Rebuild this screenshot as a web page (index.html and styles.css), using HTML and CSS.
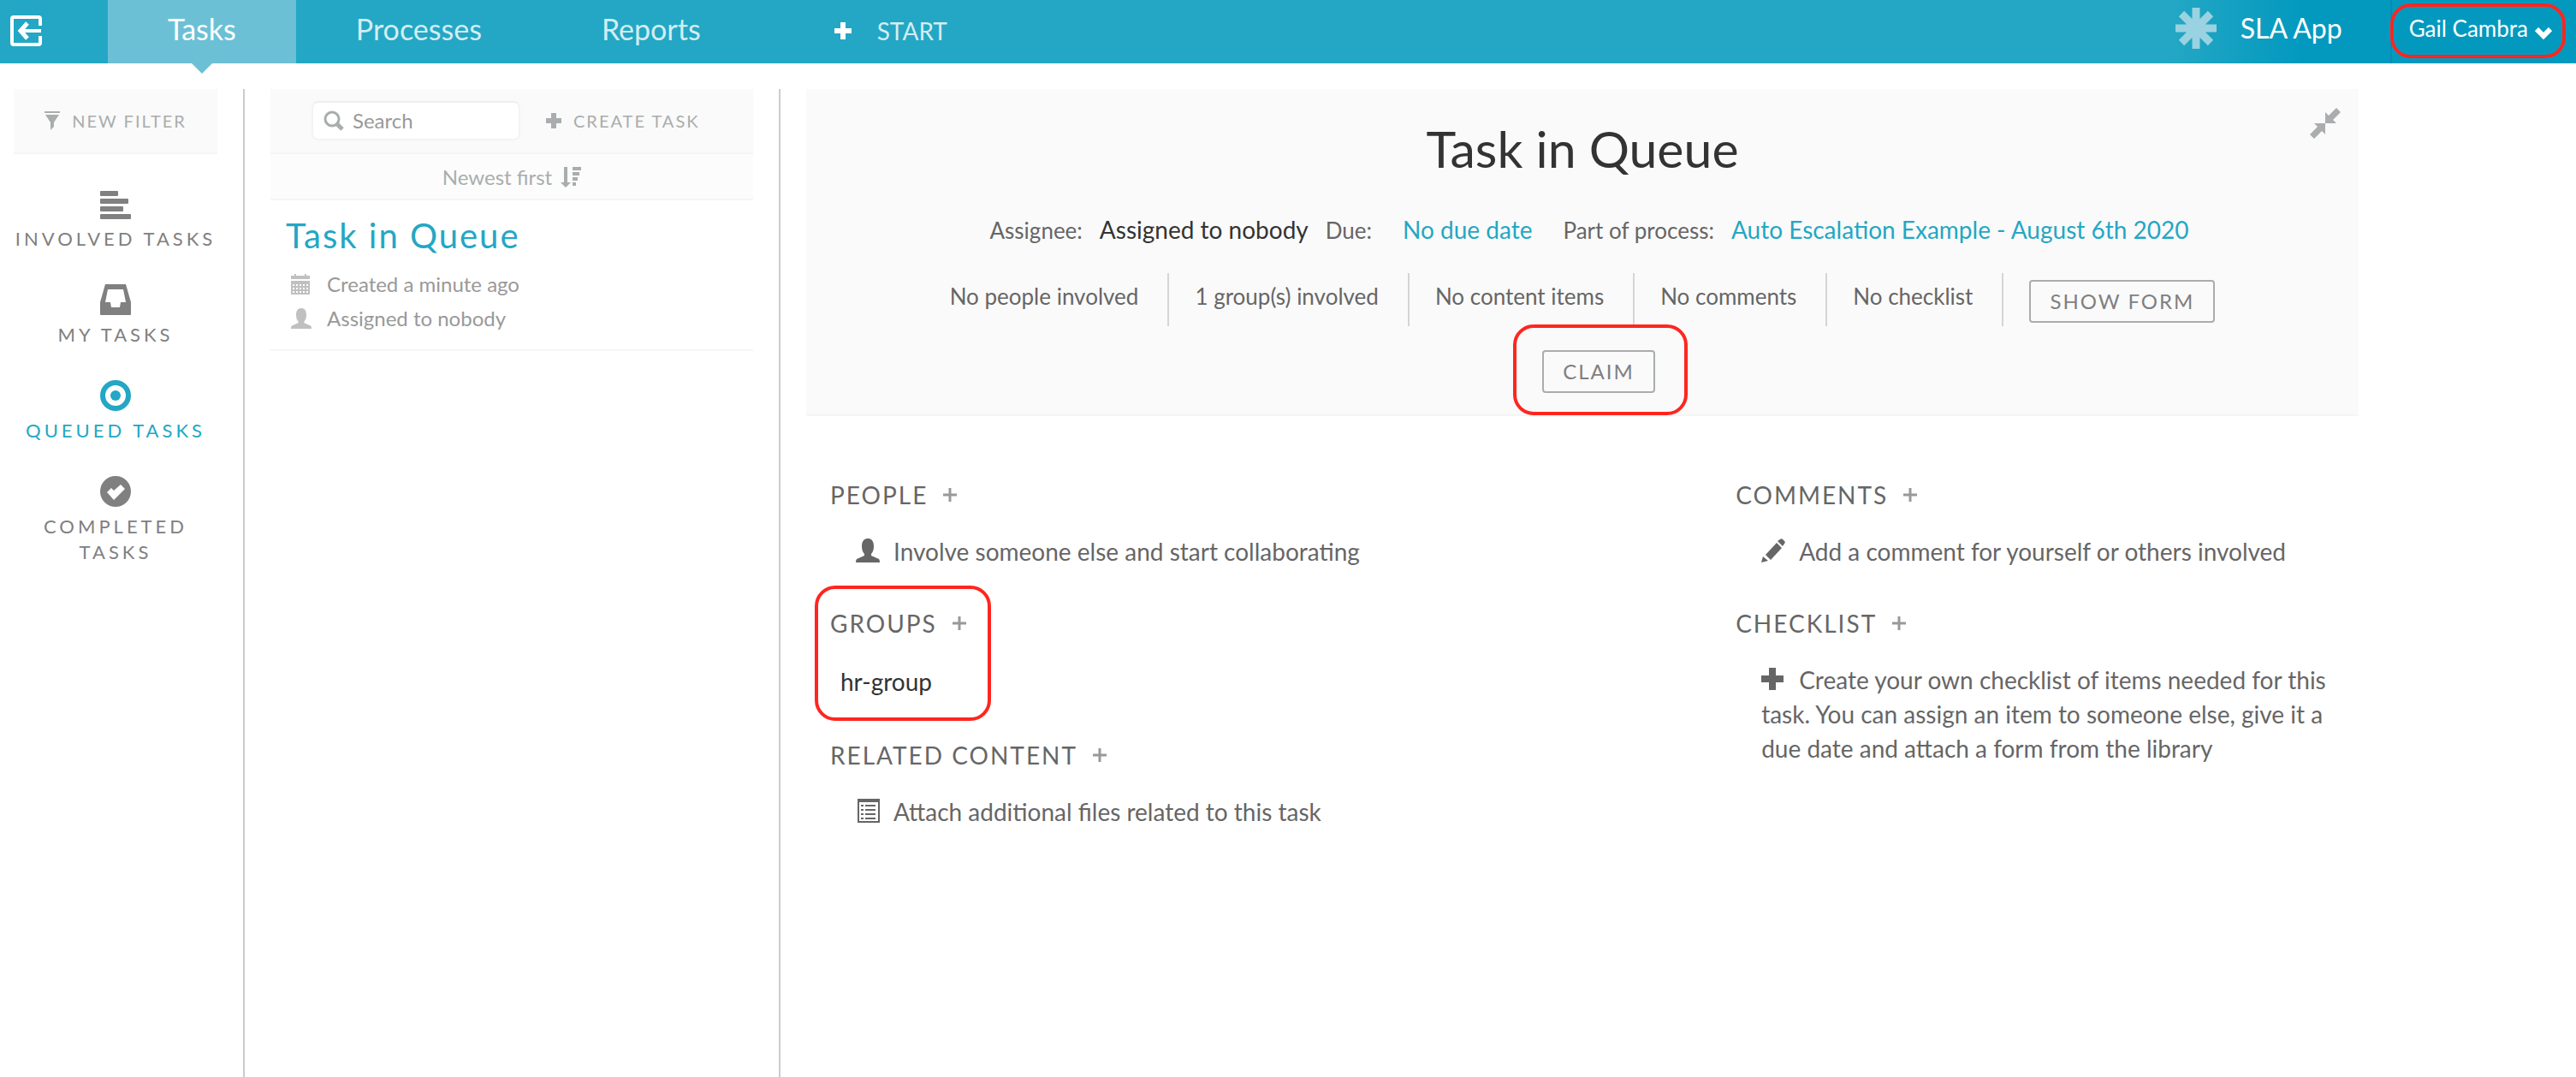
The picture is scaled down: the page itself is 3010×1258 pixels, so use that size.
FILE: index.html
```html
<!DOCTYPE html>
<html lang="en">
<head>
<meta charset="utf-8">
<title>Tasks</title>
<link rel="stylesheet" href="styles.css">
</head>
<body>
<header class="topbar">
  <button class="home" type="button" aria-label="Back to apps">
    <svg width="37" height="36" viewBox="0 0 37 36" fill="none" stroke="currentColor" stroke-width="4"><path d="M35 12V4q0-2-2-2H4q-2 0-2 2v28q0 2 2 2h29q2 0 2-2v-8"/><path d="M36 18H13"/><path d="M20 9l-8 9 8 9" stroke-width="5"/></svg>
  </button>
  <nav class="tabs">
    <a class="tab tab-active" href="#tasks">Tasks</a>
    <a class="tab" href="#processes">Processes</a>
    <a class="tab" href="#reports">Reports</a>
  </nav>
  <button class="start" type="button">
    <svg width="20" height="20" viewBox="0 0 20 20" fill="#fff"><path d="M7 0h6v7h7v6h-7v7H7v-7H0V7h7z"/></svg>
    START
  </button>
  <div class="app">
    <svg width="48" height="48" viewBox="0 0 48 48" stroke="currentColor" stroke-width="9"><path d="M24 0v48M0 24h48M7 7l34 34M41 7L7 41"/></svg>
    <span class="app-name">SLA App</span>
  </div>
  <button class="user callout callout-user" type="button">
    Gail Cambra
    <svg width="20" height="14" viewBox="0 0 20 14" fill="none" stroke="currentColor" stroke-width="6"><path d="M2 2l8 8 8-8"/></svg>
  </button>
</header>

<main class="columns">
  <aside class="filters">
    <div class="panel filter-bar">
      <button class="quiet" type="button">
        <svg width="18" height="22" viewBox="0 0 18 22" fill="currentColor"><path d="M0 0h18v2H0zM1 4h16l-6 9v5l-4 4v-9z"/></svg>
        NEW FILTER
      </button>
    </div>
    <nav class="filter-list">
      <a class="filter" href="#involved">
        <svg width="36" height="36" viewBox="0 0 36 36" fill="currentColor"><rect y="3" width="21" height="6" rx="1"/><rect y="12" width="33" height="6" rx="1"/><rect y="21" width="27" height="6" rx="1"/><rect y="30" width="36" height="6" rx="1"/></svg>
        INVOLVED TASKS
      </a>
      <a class="filter" href="#my">
        <svg width="36" height="36" viewBox="0 0 36 36" fill="currentColor" fill-rule="evenodd"><path d="M6 0h24l6 21v14q0 1-1 1H1q-1 0-1-1V21zM9 6L6 21h6l1 6h10l1-6h6L27 6z"/></svg>
        MY TASKS
      </a>
      <a class="filter filter-active" href="#queued">
        <svg width="36" height="36" viewBox="0 0 36 36"><circle cx="18" cy="18" r="15" fill="none" stroke="currentColor" stroke-width="6"/><circle cx="18" cy="18" r="6" fill="currentColor"/></svg>
        QUEUED TASKS
      </a>
      <a class="filter" href="#completed">
        <svg width="36" height="36" viewBox="0 0 36 36" fill="currentColor" fill-rule="evenodd"><path d="M18 0a18 18 0 1 1 0 36a18 18 0 1 1 0-36zM8 19l8 9 13-13-5-5-8 7-3-3z"/></svg>
        COMPLETED TASKS
      </a>
    </nav>
  </aside>

  <section class="tasks">
    <div class="panel task-bar">
      <div class="search">
        <svg width="24" height="24" viewBox="0 0 24 24" fill="none" stroke="currentColor"><circle cx="10" cy="10" r="8" stroke-width="3"/><path d="M15 15l7 7" stroke-width="5"/></svg>
        <input type="text" placeholder="Search" aria-label="Search">
      </div>
      <button class="quiet create" type="button">
        <svg width="18" height="18" viewBox="0 0 18 18" fill="currentColor"><path d="M6 0h6v6h6v6h-6v6H6v-6H0V6h6z"/></svg>
        CREATE TASK
      </button>
    </div>
    <button class="sort" type="button">
      Newest first
      <svg width="24" height="24" viewBox="0 0 24 24" fill="currentColor"><path d="M4 0h4v18h4l-6 6-6-6h4zM14 0h10v4H14zM14 6h8v4h-8zM14 12h6v4h-6zM14 18h4v4h-4z"/></svg>
    </button>
    <article class="task">
      <h2 class="task-name">Task in Queue</h2>
      <p class="task-line">
        <svg width="24" height="24" viewBox="0 0 24 24" fill="currentColor" fill-rule="evenodd"><path d="M0 2h4V0h2v2h10V0h2v2h4v4H0zM0 8h22v16H0zM2 12v2h2v-2zM6 12v2h2v-2zM10 12v2h2v-2zM14 12v2h2v-2zM18 12v2h2v-2zM2 16v2h2v-2zM6 16v2h2v-2zM10 16v2h2v-2zM14 16v2h2v-2zM18 16v2h2v-2zM2 20v2h2v-2zM6 20v2h2v-2zM10 20v2h2v-2zM14 20v2h2v-2zM18 20v2h2v-2z"/></svg>
        Created a minute ago
      </p>
      <p class="task-line">
        <svg width="24" height="24" viewBox="0 0 28 28" fill="currentColor"><path d="M14 0c5 0 7 4 7 9 0 4-1 7-3 9v2l9 4q1 1 1 4H0q0-3 1-4l9-4v-2c-2-2-3-5-3-9 0-5 2-9 7-9z"/></svg>
        Assigned to nobody
      </p>
    </article>
  </section>

  <section class="detail">
    <div class="panel summary">
      <button class="collapse" type="button" aria-label="Collapse">
        <svg width="36" height="36" viewBox="0 0 36 36" fill="currentColor"><path d="M18 18V5l4 4 9-9 5 5-9 9 4 4zM18 18v13l-4-4-9 9-5-5 9-9-4-4z"/></svg>
      </button>
      <h1 class="title">Task in Queue</h1>
      <div class="meta">
        <span class="meta-label">Assignee:</span><span class="meta-value">Assigned to nobody</span>
        <span class="meta-label">Due:</span><a class="meta-value due" href="#due">No due date</a>
        <span class="meta-label">Part of process:</span><a class="meta-value" href="#process">Auto Escalation Example - August 6th 2020</a>
      </div>
      <div class="facts">
        <span class="fact">No people involved</span>
        <span class="fact">1 group(s) involved</span>
        <span class="fact">No content items</span>
        <span class="fact">No comments</span>
        <span class="fact">No checklist</span>
        <button class="action show-form" type="button">SHOW FORM</button>
      </div>
      <div class="claim-row">
        <button class="action callout callout-claim" type="button">CLAIM</button>
      </div>
    </div>

    <div class="sections">
      <div class="side">
        <section class="block">
          <h3 class="block-title">PEOPLE <button class="add" type="button" aria-label="Add people"><svg width="16" height="16" viewBox="0 0 16 16" stroke="currentColor" stroke-width="3"><path d="M8 0v16M0 8h16"/></svg></button></h3>
          <p class="hint"><svg width="28" height="28" viewBox="0 0 28 28" fill="currentColor"><path d="M14 0c5 0 7 4 7 9 0 4-1 7-3 9v2l9 4q1 1 1 4H0q0-3 1-4l9-4v-2c-2-2-3-5-3-9 0-5 2-9 7-9z"/></svg>Involve someone else and start collaborating</p>
        </section>
        <section class="block callout callout-groups">
          <h3 class="block-title">GROUPS <button class="add" type="button" aria-label="Add groups"><svg width="16" height="16" viewBox="0 0 16 16" stroke="currentColor" stroke-width="3"><path d="M8 0v16M0 8h16"/></svg></button></h3>
          <p class="group">hr-group</p>
        </section>
        <section class="block">
          <h3 class="block-title">RELATED CONTENT <button class="add" type="button" aria-label="Add content"><svg width="16" height="16" viewBox="0 0 16 16" stroke="currentColor" stroke-width="3"><path d="M8 0v16M0 8h16"/></svg></button></h3>
          <p class="hint"><svg width="28" height="28" viewBox="0 0 28 28" fill="currentColor" fill-rule="evenodd"><path d="M2 0h26v28H2zM4 4v22h22V4zM6 7h3v2H6zM11 7h12v2H11zM6 12h3v2H6zM11 12h12v2H11zM6 17h3v2H6zM11 17h12v2H11zM6 22h3v2H6zM11 22h12v2H11z"/></svg>Attach additional files related to this task</p>
        </section>
      </div>
      <div class="side">
        <section class="block">
          <h3 class="block-title">COMMENTS <button class="add" type="button" aria-label="Add comment"><svg width="16" height="16" viewBox="0 0 16 16" stroke="currentColor" stroke-width="3"><path d="M8 0v16M0 8h16"/></svg></button></h3>
          <p class="hint"><svg width="28" height="28" viewBox="0 0 28 28" fill="currentColor"><path d="M22 1q2-2 4 1 3 2 1 4l-2 3-6-6zM18 5l6 6L11 25l-6-6zM2 21l6 5-8 2z"/></svg>Add a comment for yourself or others involved</p>
        </section>
        <section class="block">
          <h3 class="block-title">CHECKLIST <button class="add" type="button" aria-label="Add checklist item"><svg width="16" height="16" viewBox="0 0 16 16" stroke="currentColor" stroke-width="3"><path d="M8 0v16M0 8h16"/></svg></button></h3>
          <p class="hint"><svg width="28" height="28" viewBox="0 0 28 28" fill="currentColor"><path d="M9 1h8v9h9v8h-9v9H9v-9H0v-8h9z"/></svg>Create your own checklist of items needed for this task. You can assign an item to someone else, give it a due date and attach a form from the library</p>
        </section>
      </div>
    </div>
  </section>
</main>
</body>
</html>
```
FILE: styles.css
```css
*, *::before, *::after { box-sizing: border-box; }
body {
  margin: 0;
  font-family: Lato, "Liberation Sans", sans-serif;
  font-size: 28px;
  line-height: 40px;
  color: #666;
  background: #fff;
}
h1, h2, h3, p { margin: 0; font-weight: 400; }
a { color: inherit; text-decoration: none; }
button {
  font: inherit;
  color: inherit;
  background: none;
  border: 0;
  padding: 0;
  cursor: pointer;
}
svg { flex: none; }

/* Top bar */
.topbar {
  display: flex;
  height: 74px;
  color: #fff;
  background: #23a7c4;
}
.home { width: 126px; padding: 0 0 2px 12px; text-align: left; display: flex; align-items: center; }
.tabs { display: flex; }
.tab {
  padding: 0 70px;
  font-size: 34px;
  line-height: 68px;
  color: #d3edf3;
}
.tab-active { position: relative; color: #fff; background: #6cc0d5; }
.tab-active::after {
  content: "";
  position: absolute;
  top: 100%;
  left: calc(50% - 12px);
  border: 12px solid transparent;
  border-top-color: #6cc0d5;
  border-bottom: 0;
}
.start {
  display: flex;
  align-items: center;
  gap: 30px;
  margin-left: 86px;
  padding-bottom: 2px;
  color: #d3edf3;
}
.app {
  display: flex;
  align-items: center;
  gap: 28px;
  margin-left: auto;
  padding: 0 56px 8px 44px;
  background: linear-gradient(to right, #23a7c4 40px, #0399bf 190px);
  color: #9ad2e1;
}
.app-name { font-size: 32px; color: #fff; }
.user {
  display: flex;
  align-items: center;
  gap: 8px;
  padding: 0 28px 8px 20px;
  border-left: 2px solid #058db1;
  background: #0399bf;
  font-size: 26px;
}
.user svg { margin-top: 12px; }

/* Highlight frames */
.callout { position: relative; }
.callout::before {
  content: "";
  position: absolute;
  border: 4px solid #ff2620;
  border-radius: 24px;
  pointer-events: none;
}
.callout-user::before { inset: 4px 12px 6px -2px; }
.callout-claim::before { inset: -32px -40px -28px -36px; }
.callout-groups::before { inset: -24px auto 20px -18px; width: 206px; }

/* Columns */
.columns {
  display: grid;
  grid-template-columns: 286fr 626fr 2098fr;
  min-height: calc(100vh - 74px);
  padding-top: 30px;
}
.panel { background: #fafafa; border-bottom: 2px solid #f5f5f5; }
.quiet {
  display: flex;
  align-items: center;
  gap: 14px;
  font-size: 20px;
  letter-spacing: 2px;
  color: #a9adad;
}

/* Filters */
.filters { padding: 0 30px 0 16px; border-right: 2px solid #ccc; }
.filter-bar { display: flex; justify-content: center; height: 76px; }
.filter-list {
  display: flex;
  flex-direction: column;
  gap: 38px;
  padding-top: 40px;
  font-size: 22px;
  line-height: 30px;
  letter-spacing: 4px;
  text-align: center;
  color: #808080;
}
.filter { display: flex; flex-direction: column; align-items: center; gap: 8px; }
.filter-active { color: #23a7c4; }

/* Task list */
.tasks { padding: 0 30px; border-right: 2px solid #ccc; }
.task-bar { display: flex; align-items: center; gap: 30px; height: 76px; padding: 0 48px; }
.search {
  display: flex;
  align-items: center;
  gap: 10px;
  width: 244px;
  height: 46px;
  padding: 0 12px;
  border: 2px solid #f3f3f3;
  border-top-color: #eee;
  border-radius: 8px;
  background: #fff;
  color: #a9adad;
}
.search input {
  flex: 1;
  min-width: 0;
  padding: 0;
  border: 0;
  outline: 0;
  background: none;
  font: inherit;
  font-size: 24px;
  color: #999;
}
.search input::placeholder { color: #999; opacity: 1; }
.sort {
  display: flex;
  align-items: center;
  justify-content: center;
  gap: 10px;
  width: 100%;
  height: 54px;
  padding-top: 2px;
  border-bottom: 2px solid #f5f5f5;
  background: #fcfcfc;
  font-size: 24px;
  color: #a9adad;
}
.task { padding: 16px 18px 4px; border-bottom: 2px solid #f5f5f5; height: 176px; }
.task-name {
  margin-bottom: 12px;
  font-size: 40px;
  line-height: 50px;
  letter-spacing: 2px;
  color: #23a7c4;
}
.task-line {
  display: flex;
  align-items: center;
  gap: 18px;
  padding-left: 6px;
  font-size: 24px;
  color: #999;
}
.task-line svg { color: #c0c0c0; }

/* Task detail */
.detail { padding: 0 254px 0 30px; }
.summary { position: relative; height: 382px; text-align: center; }
.collapse { position: absolute; top: 22px; right: 21px; color: #a9adad; line-height: 0; }
.title { padding-top: 34px; font-size: 59px; line-height: 72px; color: #333; }
.meta { display: flex; justify-content: center; align-items: baseline; margin-top: 38px; padding-left: 16px; }
.meta-label { padding-right: 20px; font-size: 26px; }
.meta-value { padding-right: 20px; color: #333; }
.meta-value:last-child { padding-right: 0; }
.meta a { color: #23a7c4; }
.meta .due { padding: 0 36px 0 16px; }
.facts { display: flex; justify-content: center; margin-top: 30px; font-size: 26px; }
.fact {
  height: 62px;
  margin-right: 30px;
  padding: 7px 34px 0 0;
  border-right: 2px solid #d5d5d5;
}
.action {
  height: 50px;
  padding: 0 22px;
  border: 2px solid #a9adad;
  border-radius: 4px;
  font-size: 24px;
  letter-spacing: 2px;
  color: #808080;
}
.show-form { margin-top: 8px; }
.claim-row { display: flex; justify-content: center; margin-top: 28px; padding-left: 38px; }

/* Detail sections */
.sections {
  display: grid;
  grid-template-columns: 7fr 5fr;
  padding-top: 72px;
}
.side { padding: 0 28px; }
.block { padding-bottom: 44px; }
.block-title { display: flex; align-items: center; gap: 18px; font-size: 28px; letter-spacing: 2px; }
.add { display: flex; color: #999; }
.hint { padding: 26px 0 0 30px; }
.hint svg { margin-right: 16px; vertical-align: -2px; }
.group { padding: 28px 0 2px 12px; color: #333; }
```
